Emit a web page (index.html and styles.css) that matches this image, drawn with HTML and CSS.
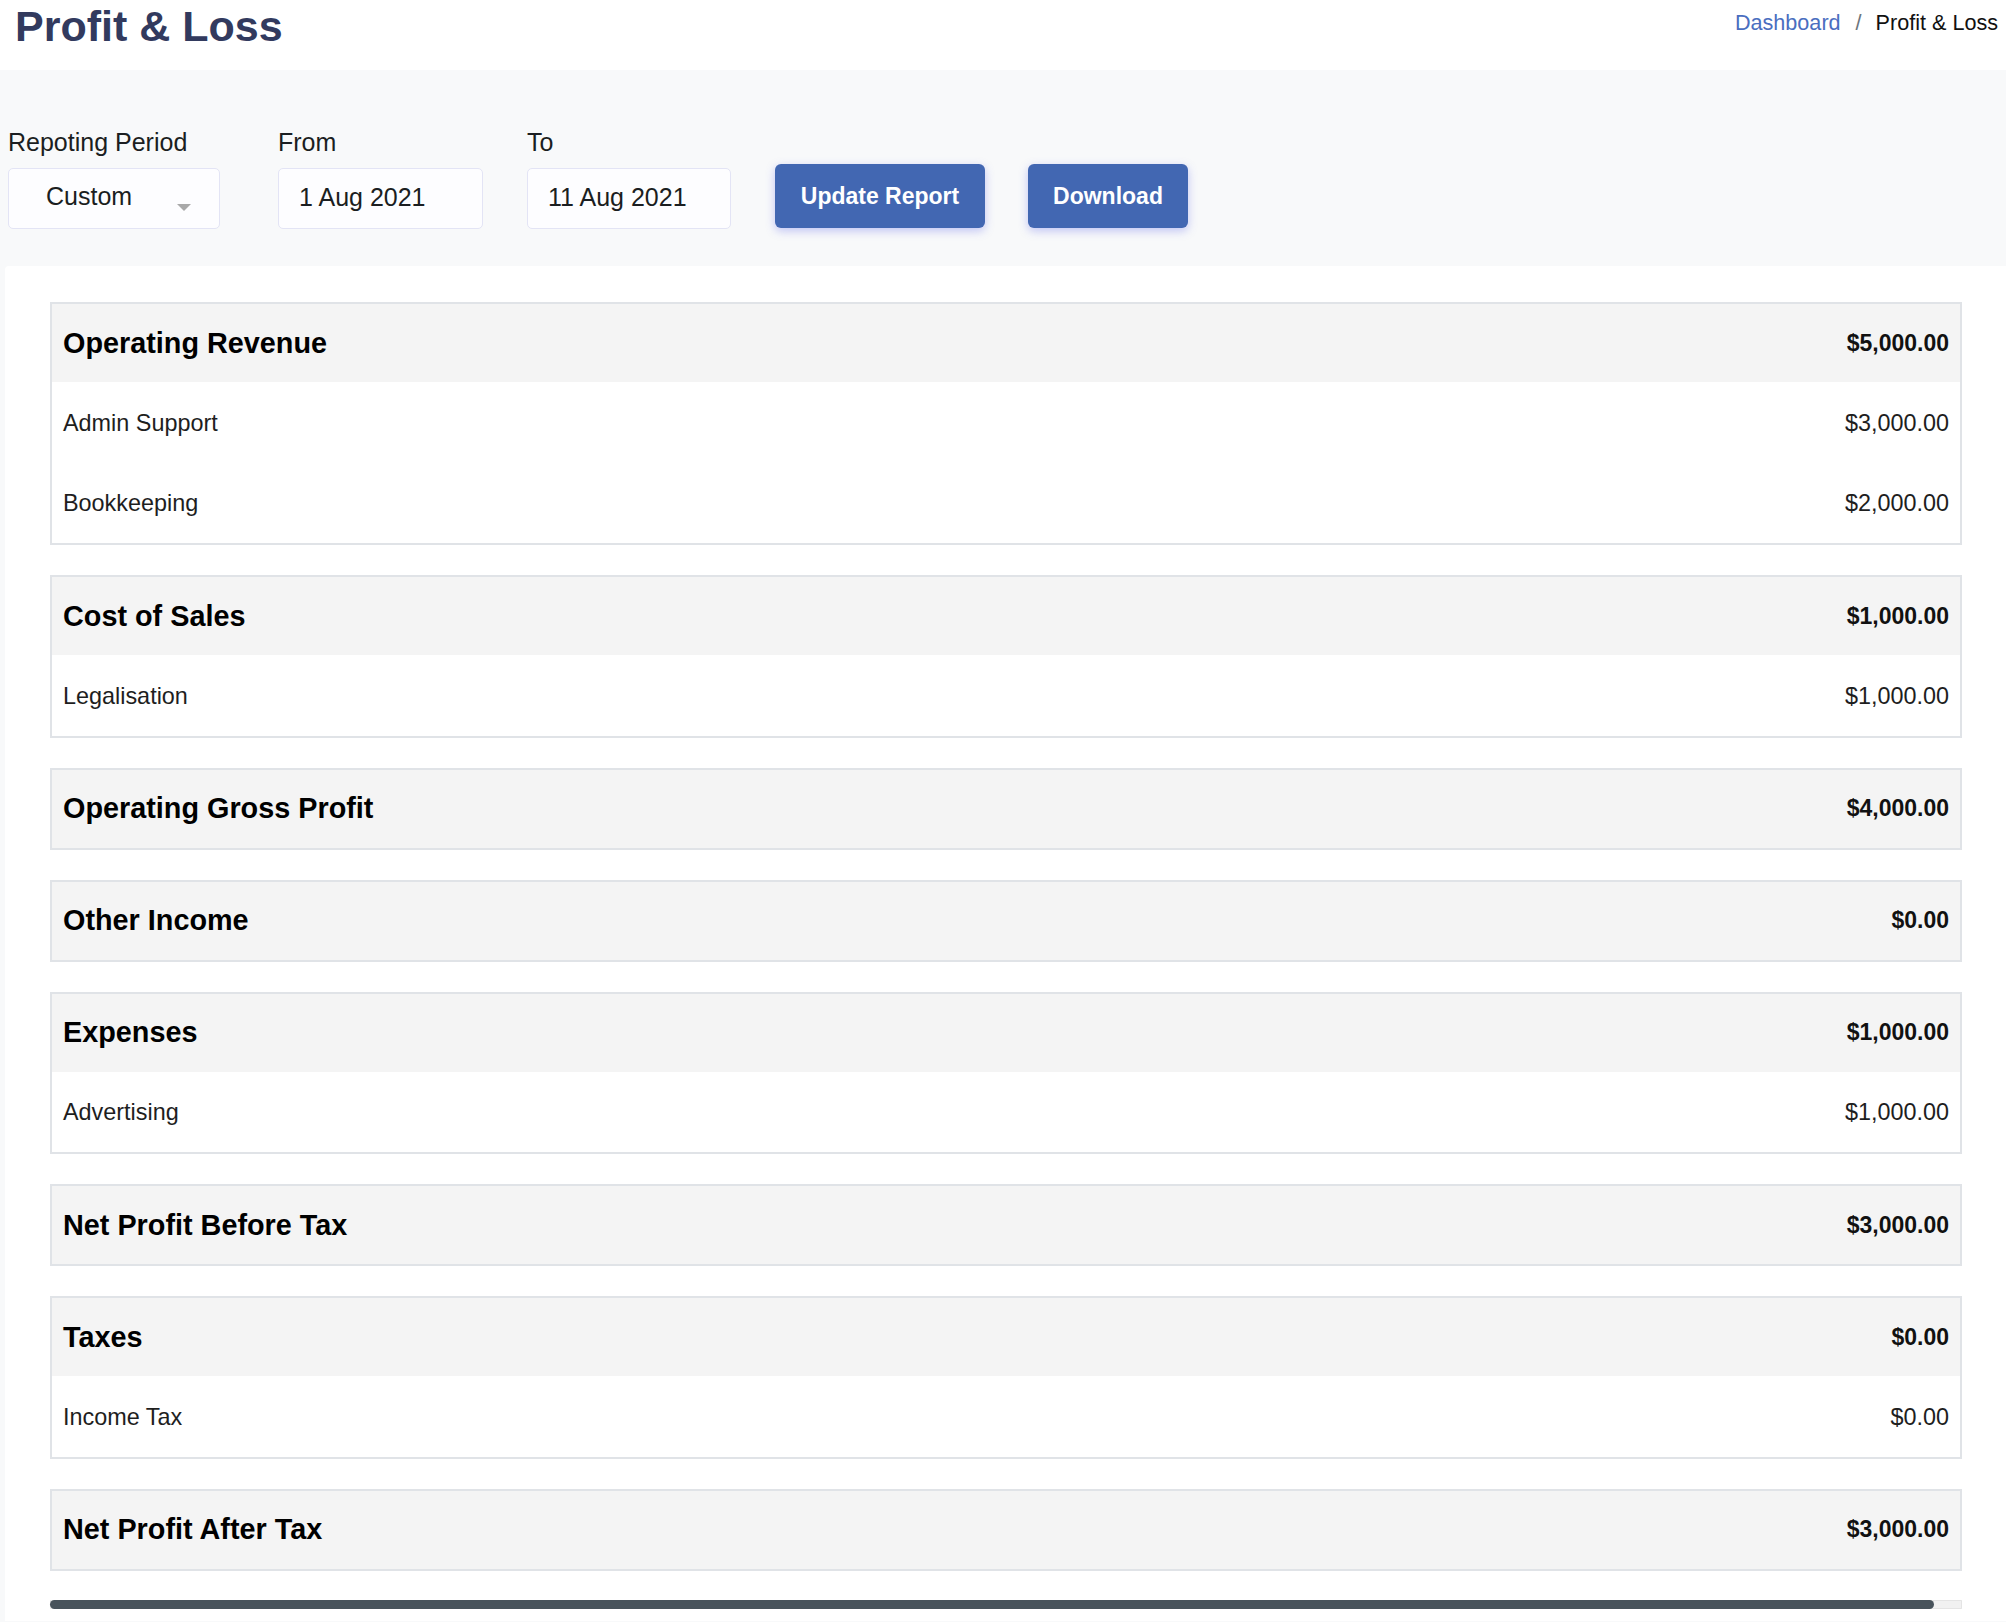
FILE: index.html
```html
<!DOCTYPE html>
<html lang="en">
<head>
<meta charset="utf-8">
<title>Profit &amp; Loss</title>
<link rel="stylesheet" href="styles.css">
</head>
<body>
<header class="page-header">
  <h1 class="page-title">Profit &amp; Loss</h1>
  <nav class="breadcrumb">
    <a class="crumb-link" href="#">Dashboard</a>
    <span class="crumb-sep">/</span>
    <span class="crumb-current">Profit &amp; Loss</span>
  </nav>
</header>

<section class="filters">
  <div class="field field-period">
    <label class="field-label">Repoting Period</label>
    <div class="select-box">
      <span class="select-value">Custom</span>
      <span class="caret"></span>
    </div>
  </div>
  <div class="field field-date">
    <label class="field-label">From</label>
    <div class="date-box">1 Aug 2021</div>
  </div>
  <div class="field field-date field-to">
    <label class="field-label">To</label>
    <div class="date-box">11 Aug 2021</div>
  </div>
  <button class="btn btn-update">Update Report</button>
  <button class="btn btn-download">Download</button>
</section>

<main class="report-card">
  <div class="report">
    <div class="group">
      <div class="row row-head"><span class="head-label">Operating Revenue</span><span class="head-amount">$5,000.00</span></div>
      <div class="row row-item"><span>Admin Support</span><span>$3,000.00</span></div>
      <div class="row row-item"><span>Bookkeeping</span><span>$2,000.00</span></div>
    </div>
    <div class="group">
      <div class="row row-head"><span class="head-label">Cost of Sales</span><span class="head-amount">$1,000.00</span></div>
      <div class="row row-item"><span>Legalisation</span><span>$1,000.00</span></div>
    </div>
    <div class="group">
      <div class="row row-head"><span class="head-label">Operating Gross Profit</span><span class="head-amount">$4,000.00</span></div>
    </div>
    <div class="group">
      <div class="row row-head"><span class="head-label">Other Income</span><span class="head-amount">$0.00</span></div>
    </div>
    <div class="group">
      <div class="row row-head"><span class="head-label">Expenses</span><span class="head-amount">$1,000.00</span></div>
      <div class="row row-item"><span>Advertising</span><span>$1,000.00</span></div>
    </div>
    <div class="group">
      <div class="row row-head"><span class="head-label">Net Profit Before Tax</span><span class="head-amount">$3,000.00</span></div>
    </div>
    <div class="group">
      <div class="row row-head"><span class="head-label">Taxes</span><span class="head-amount">$0.00</span></div>
      <div class="row row-item"><span>Income Tax</span><span>$0.00</span></div>
    </div>
    <div class="group">
      <div class="row row-head"><span class="head-label">Net Profit After Tax</span><span class="head-amount">$3,000.00</span></div>
    </div>
  </div>
  <div class="hscroll">
    <div class="hscroll-thumb"></div>
  </div>
</main>
</body>
</html>
```

FILE: styles.css
```css
html, body {
  margin: 0;
  padding: 0;
  overflow: hidden;
}

body {
  background: #f8f9fa;
  font-family: "Liberation Sans", Arial, Helvetica, sans-serif;
  color: #212529;
}

/* Header */
.page-header {
  height: 70px;
  background: #ffffff;
  display: flex;
  justify-content: space-between;
  align-items: flex-start;
  padding: 0 8px 0 15px;
  box-sizing: border-box;
}

.page-title {
  margin: 0;
  padding-top: 2px;
  font-size: 43px;
  line-height: 48px;
  font-weight: 700;
  color: #323a5e;
}

.breadcrumb {
  padding-top: 11px;
  font-size: 21.6px;
  line-height: 24px;
  display: flex;
}

.crumb-link {
  color: #4a6ec0;
  text-decoration: none;
}

.crumb-sep {
  color: #6c757d;
  margin: 0 14px 0 15px;
}

.crumb-current {
  color: #111111;
}

/* Filters */
.filters {
  height: 196px;
  box-sizing: border-box;
  padding: 57px 0 0 8px;
  display: flex;
  align-items: flex-start;
}

.field {
  display: flex;
  flex-direction: column;
}

.field-label {
  display: block;
  font-size: 25px;
  line-height: 30px;
  margin-bottom: 11px;
  color: #1b1e21;
}

.field-period {
  width: 212px;
  margin-right: 58px;
}

.field-date {
  width: 205px;
  margin-right: 44px;
}

.field-to {
  width: 204px;
}

.select-box,
.date-box {
  height: 61px;
  box-sizing: border-box;
  border: 1px solid #e3e4f5;
  border-radius: 5px;
  background: #fdfdff;
  display: flex;
  align-items: center;
  padding-bottom: 2px;
  color: #1b1e21;
}

.select-box {
  position: relative;
  padding-left: 37px;
  padding-bottom: 4px;
  font-size: 25px;
}

.caret {
  position: absolute;
  left: 168px;
  top: 35px;
  width: 0;
  height: 0;
  border-left: 7.5px solid transparent;
  border-right: 7.5px solid transparent;
  border-top: 7px solid #a9a9a9;
}

.date-box {
  padding-left: 20px;
  font-size: 25px;
}

.btn {
  margin-top: 37px;
  height: 64px;
  border: none;
  border-radius: 6px;
  background: #4267b2;
  color: #ffffff;
  font-family: "Liberation Sans", Arial, Helvetica, sans-serif;
  font-weight: 700;
  font-size: 23px;
  padding: 0;
  box-shadow: 0 3px 10px rgba(88, 98, 235, 0.35);
  cursor: pointer;
}

.btn-update {
  width: 210px;
  margin-right: 43px;
}

.btn-download {
  width: 160px;
}

/* Report card */
.report-card {
  margin-left: 5px;
  background: #ffffff;
  border-top-left-radius: 4px;
  padding: 36px 44px 12px 45px;
}

.group {
  border: 2px solid #e0e3e7;
  margin-bottom: 30px;
}

.group:last-child {
  margin-bottom: 0;
}

.row {
  display: flex;
  justify-content: space-between;
  align-items: center;
  padding: 0 11px;
}

.row-head {
  height: 78px;
  background: #f4f4f4;
  color: #000000;
}

.head-label {
  font-size: 28.8px;
  font-weight: 700;
}

.head-amount {
  font-size: 23px;
  font-weight: 700;
  color: #111111;
}

.row-item {
  height: 80.5px;
  padding-top: 2px;
  box-sizing: border-box;
  font-size: 23.4px;
  color: #1e1e1e;
  background: #ffffff;
}

/* Horizontal scrollbar */
.hscroll {
  margin-top: 29px;
  height: 9px;
  background: #f1f1f1;
  box-shadow: inset 0 0 0 1px #e4e4e4;
  border-radius: 1px;
}

.hscroll-thumb {
  width: calc(100% - 28px);
  height: 9px;
  background: #48535b;
  border-radius: 5px;
}
```
